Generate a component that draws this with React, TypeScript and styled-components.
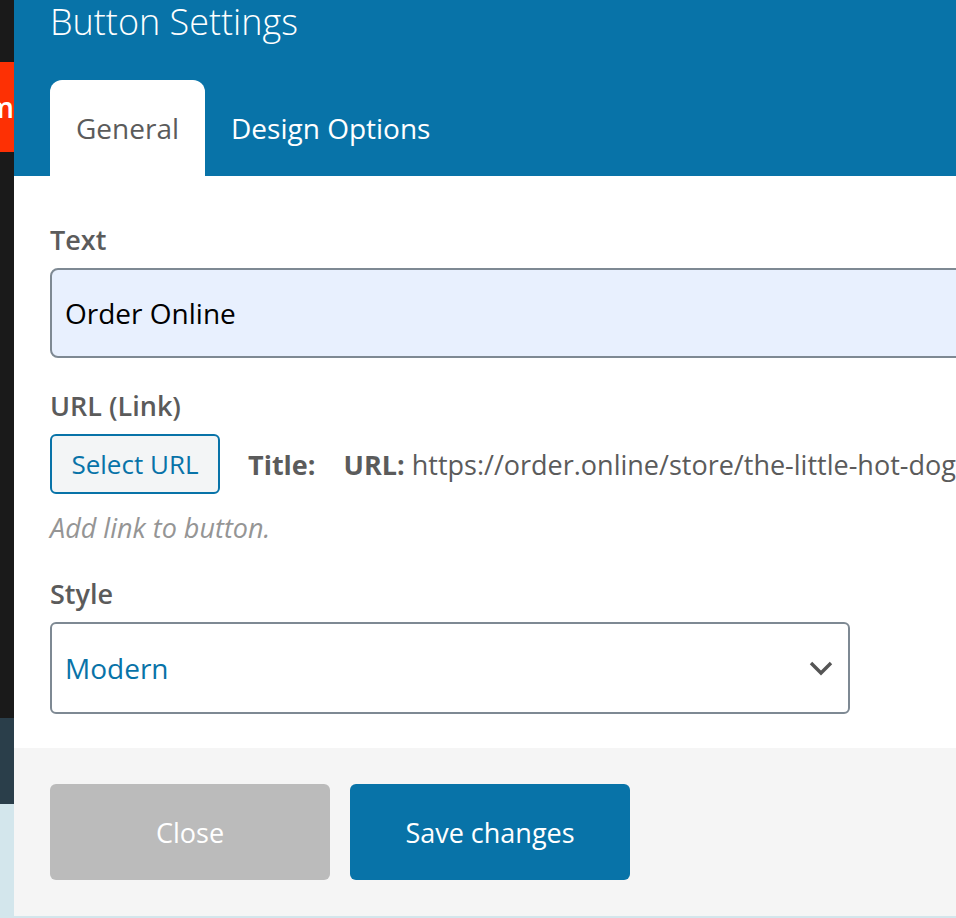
import React from "react";
import styled, { createGlobalStyle } from "styled-components";

const GlobalStyle = createGlobalStyle`
  html, body {
    margin: 0;
    padding: 0;
    height: 100%;
    overflow: hidden;
    background: #d3e6ec;
  }
  * { box-sizing: border-box; }
`;

const Page = styled.div`
  display: flex;
  width: 956px;
  height: 918px;
  overflow: hidden;
  font-family: "Open Sans", "Noto Sans", sans-serif;
  color: #5b5b5b;
`;

const Backdrop = styled.div`
  width: 14px;
  flex: none;
  display: flex;
  flex-direction: column;
  overflow: hidden;
`;

const BackdropBand = styled.div<{ $h: number; $bg: string }>`
  flex: none;
  height: ${(p) => p.$h}px;
  background: ${(p) => p.$bg};
`;

const OrangeBand = styled.div`
  flex: none;
  height: 90px;
  background: #fd3004;
  color: #fff;
  font-size: 28px;
  font-weight: 600;
  line-height: 90px;
  display: flex;
  justify-content: flex-end;
  overflow: hidden;
`;

const Modal = styled.div`
  flex: 1;
  min-width: 0;
  height: 916px;
  display: flex;
  flex-direction: column;
  background: #fff;
  overflow: hidden;
`;

const Header = styled.div`
  height: 176px;
  flex: none;
  background: #0873a8;
  padding: 0 36px;
  display: flex;
  flex-direction: column;
  justify-content: space-between;
`;

const Title = styled.h2`
  margin: 0;
  font-size: 36px;
  font-weight: 300;
  line-height: 44px;
  color: #fff;
`;

const Tabs = styled.div`
  display: flex;
`;

const Tab = styled.div<{ $active?: boolean }>`
  height: 96px;
  padding: 0 26px;
  font-size: 28px;
  line-height: 96px;
  border-radius: 12px 12px 0 0;
  background: ${(p) => (p.$active ? "#fff" : "transparent")};
  color: ${(p) => (p.$active ? "#5b5b5b" : "#fff")};
`;

const Body = styled.div`
  flex: 1;
  padding: 46px 36px 0;
  display: flex;
  flex-direction: column;
`;

const Label = styled.div`
  font-size: 27px;
  font-weight: 600;
  line-height: 36px;
  color: #5b5b5b;
`;

const TextInput = styled.div`
  width: 1000px;
  height: 90px;
  margin: 10px 0 30px;
  padding: 0 13px;
  display: flex;
  align-items: center;
  border: 2px solid #7e8993;
  border-radius: 8px;
  background: #e8f0fe;
  color: #000;
  font-size: 28px;
`;

const UrlRow = styled.div`
  display: flex;
  align-items: center;
  margin-top: 10px;
  white-space: nowrap;
`;

const SelectButton = styled.div`
  flex: none;
  width: 170px;
  height: 60px;
  display: flex;
  align-items: center;
  justify-content: center;
  border: 2px solid #0873a8;
  border-radius: 6px;
  background: #f3f5f6;
  color: #0873a8;
  font-size: 26px;
`;

const UrlMeta = styled.div`
  margin-left: 28px;
  font-size: 27px;
  color: #5b5b5b;

  strong {
    font-weight: 700;
  }

  strong + strong {
    margin-left: 28px;
  }
`;

const Hint = styled.div`
  margin: 16px 0 30px;
  font-size: 27px;
  font-style: italic;
  line-height: 36px;
  color: #959595;
`;

const SelectBox = styled.div`
  width: 800px;
  height: 92px;
  margin-top: 10px;
  padding: 0 13px;
  display: flex;
  align-items: center;
  justify-content: space-between;
  border: 2px solid #7e8993;
  border-radius: 6px;
  background: #fff;
  color: #0873a8;
  font-size: 28px;
`;

const Chevron = styled.svg`
  width: 24px;
  height: 16px;
  margin-right: 2px;
`;

const Footer = styled.div`
  flex: none;
  height: 168px;
  padding: 36px 36px 0;
  display: flex;
  gap: 20px;
  background: #f5f5f5;
`;

const FooterButton = styled.div<{ $primary?: boolean }>`
  width: 280px;
  height: 96px;
  display: flex;
  align-items: center;
  justify-content: center;
  border-radius: 6px;
  background: ${(p) => (p.$primary ? "#0873a8" : "#bbbbbb")};
  color: #fff;
  font-size: 27px;
`;

const App: React.FC = () => {
  return (
    <Page>
      <GlobalStyle />
      <Backdrop>
        <BackdropBand $h={62} $bg="#1a1a1a" />
        <OrangeBand>m</OrangeBand>
        <BackdropBand $h={566} $bg="#1a1a1a" />
        <BackdropBand $h={86} $bg="#2a3e4a" />
        <BackdropBand $h={114} $bg="#d3e6ec" />
      </Backdrop>
      <Modal>
        <Header>
          <Title>Button Settings</Title>
          <Tabs>
            <Tab $active>General</Tab>
            <Tab>Design Options</Tab>
          </Tabs>
        </Header>
        <Body>
          <Label>Text</Label>
          <TextInput>Order Online</TextInput>
          <Label>URL (Link)</Label>
          <UrlRow>
            <SelectButton>Select URL</SelectButton>
            <UrlMeta>
              <strong>Title:</strong>
              <strong>URL:</strong> https://order.online/store/the-little-hot-dog
            </UrlMeta>
          </UrlRow>
          <Hint>Add link to button.</Hint>
          <Label>Style</Label>
          <SelectBox>
            Modern
            <Chevron viewBox="0 0 24 16">
              <path d="M2 3l10 10L22 3" fill="none" stroke="#555" strokeWidth="3.4" />
            </Chevron>
          </SelectBox>
        </Body>
        <Footer>
          <FooterButton>Close</FooterButton>
          <FooterButton $primary>Save changes</FooterButton>
        </Footer>
      </Modal>
    </Page>
  );
};

export default App;
